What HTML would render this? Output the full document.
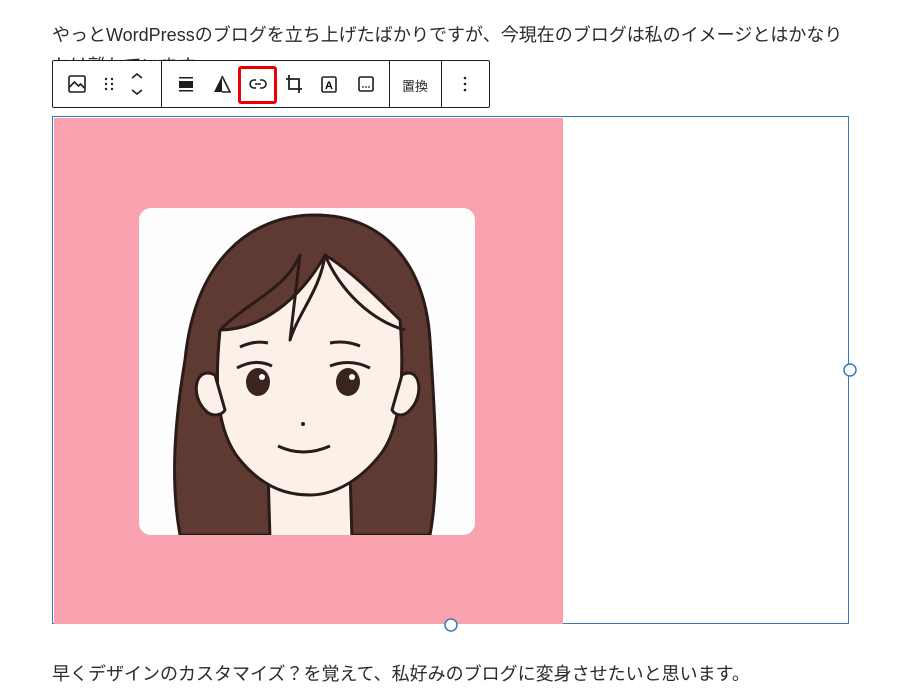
<!DOCTYPE html>
<html><head><meta charset="utf-8"><style>
body{margin:0;width:900px;height:700px;background:#fff;position:relative;overflow:hidden;font-family:"Liberation Sans","Noto Sans CJK JP",sans-serif;color:#2a2a2a}
.t{position:absolute;left:52px;font-size:18px;white-space:nowrap}
.tb{position:absolute;left:52px;top:60px;width:436px;height:46px;border:1px solid #1e1e1e;background:#fff;border-radius:2px}
.dv{position:absolute;top:0;width:1px;height:46px;background:#1e1e1e}
.ic{position:absolute;top:11px}
</style></head><body>
<div class="t" style="top:21px">やっとWordPressのブログを立ち上げたばかりですが、今現在のブログは私のイメージとはかなり</div>
<div class="t" style="top:52px">かけ離れています。</div>
<div class="tb">
<div class="dv" style="left:108px"></div><div class="dv" style="left:336px"></div><div class="dv" style="left:388px"></div>
<svg class="ic" style="left:12px" width="24" height="24" viewBox="0 0 24 24"><rect x="4" y="4" width="16" height="16" rx="1.5" fill="none" stroke="#1e1e1e" stroke-width="1.6"/><path d="M4.5 15l5-5 4 4 2-2 4 4" fill="none" stroke="#1e1e1e" stroke-width="1.6"/></svg>
<svg class="ic" style="left:44px" width="24" height="24" viewBox="0 0 24 24"><g fill="#1e1e1e"><circle cx="9" cy="7" r="1.2"/><circle cx="15" cy="7" r="1.2"/><circle cx="9" cy="12" r="1.2"/><circle cx="15" cy="12" r="1.2"/><circle cx="9" cy="17" r="1.2"/><circle cx="15" cy="17" r="1.2"/></g></svg>
<svg class="ic" style="left:72px" width="24" height="24" viewBox="0 0 24 24"><path d="M7 6l5-4 5 4M7 18l5 4 5-4" fill="none" stroke="#1e1e1e" stroke-width="1.6"/></svg>
<svg class="ic" style="left:121px" width="24" height="24" viewBox="0 0 24 24"><rect x="5" y="9" width="14" height="7" fill="#1e1e1e"/><rect x="5" y="5" width="14" height="1.5" fill="#1e1e1e"/><rect x="5" y="18" width="14" height="1.5" fill="#1e1e1e"/></svg>
<svg class="ic" style="left:157px" width="24" height="24" viewBox="0 0 24 24"><path d="M12 4L4 20h8z" fill="#1e1e1e"/><path d="M12 4l8 16h-8" fill="none" stroke="#1e1e1e" stroke-width="1.6"/></svg>
<div style="position:absolute;left:185px;top:5px;width:33px;height:32px;border:3px solid #e00;border-radius:3px"></div>
<svg class="ic" style="left:193px" width="24" height="24" viewBox="0 0 24 24"><path d="M10 8H8a4 4 0 000 8h2M14 8h2a4 4 0 010 8h-2M9 12h6" fill="none" stroke="#1e1e1e" stroke-width="1.6"/></svg>
<svg class="ic" style="left:229px" width="24" height="24" viewBox="0 0 24 24"><path d="M7 3v14h13M4 7h13v14" fill="none" stroke="#1e1e1e" stroke-width="1.8"/></svg>
<svg class="ic" style="left:264px" width="24" height="24" viewBox="0 0 24 24"><rect x="5" y="5" width="14" height="15" rx="1.5" fill="none" stroke="#1e1e1e" stroke-width="1.6"/><text x="12" y="17" font-size="11" font-weight="bold" text-anchor="middle" font-family="Liberation Sans">A</text></svg>
<svg class="ic" style="left:301px" width="24" height="24" viewBox="0 0 24 24"><rect x="5" y="5" width="14" height="14" rx="1.5" fill="none" stroke="#1e1e1e" stroke-width="1.6"/><g fill="#1e1e1e"><circle cx="9" cy="15" r=".9"/><circle cx="12" cy="15" r=".9"/><circle cx="15" cy="15" r=".9"/></g></svg>
<div style="position:absolute;left:336px;width:52px;top:15px;text-align:center;font-size:13px">置換</div>
<svg class="ic" style="left:400px" width="24" height="24" viewBox="0 0 24 24"><g fill="#1e1e1e"><circle cx="12" cy="6" r="1.3"/><circle cx="12" cy="12" r="1.3"/><circle cx="12" cy="18" r="1.3"/></g></svg>
</div>
<div style="position:absolute;left:52px;top:116px;width:795px;height:506px;border:1.5px solid #3b7ab8"></div>
<div style="position:absolute;left:53.5px;top:117.5px;width:509.5px;height:506px;background:#f7a2ae"></div>
<svg style="position:absolute;left:0;top:0" width="900" height="700">
<rect x="139" y="208" width="336" height="327" rx="12" fill="#fdfdfd"/>
<clipPath id="c"><rect x="139" y="208" width="336" height="327" rx="12"/></clipPath>
<g clip-path="url(#c)" stroke="#2a1a18" stroke-width="3" stroke-linejoin="round">
<path d="M180 535 C170 480 175 420 185 360 C195 260 250 215 315 215 C385 215 425 265 430 340 C435 420 440 480 430 535 Z" fill="#5e3a33"/>
<path d="M268 470 L270 540 L352 540 L350 470 Z" fill="#fcf1e8"/>
<path d="M220 330 C215 380 215 430 240 460 C265 490 290 495 310 495 C335 495 360 480 380 455 C400 430 405 380 400 320 C380 300 350 270 325 255 C300 300 260 330 220 330 Z" fill="#fcf1e8"/>
<path d="M215 375 C195 365 190 395 205 410 C212 418 222 415 225 410 Z M402 375 C420 365 425 395 410 410 C403 418 395 415 392 410 Z" fill="#fcf1e8"/>
<path d="M220 330 C250 300 285 290 300 255 L290 340 C300 310 320 290 325 255 C340 290 370 320 405 330" fill="none"/>
</g>
<g fill="#3a2420"><ellipse cx="258" cy="382" rx="12" ry="14"/><ellipse cx="348" cy="382" rx="12" ry="14"/></g>
<circle cx="262" cy="377" r="3" fill="#fff"/><circle cx="352" cy="377" r="3" fill="#fff"/>
<path d="M237 368 Q255 358 272 366 M330 366 Q350 358 370 368 M240 347 Q255 340 268 343 M330 343 Q345 340 360 346" stroke="#2a1a18" stroke-width="3" fill="none"/>
<circle cx="303" cy="424" r="2" fill="#2a1a18"/>
<path d="M278 446 Q303 458 330 446" stroke="#2a1a18" stroke-width="3" fill="none"/>
<circle cx="850" cy="370" r="6" fill="#fff" stroke="#3b7ab8" stroke-width="1.5"/>
<circle cx="451" cy="625" r="6" fill="#fff" stroke="#3b7ab8" stroke-width="1.5"/>
</svg>
<div class="t" style="top:660px">早くデザインのカスタマイズ？を覚えて、私好みのブログに変身させたいと思います。</div>
</body></html>
